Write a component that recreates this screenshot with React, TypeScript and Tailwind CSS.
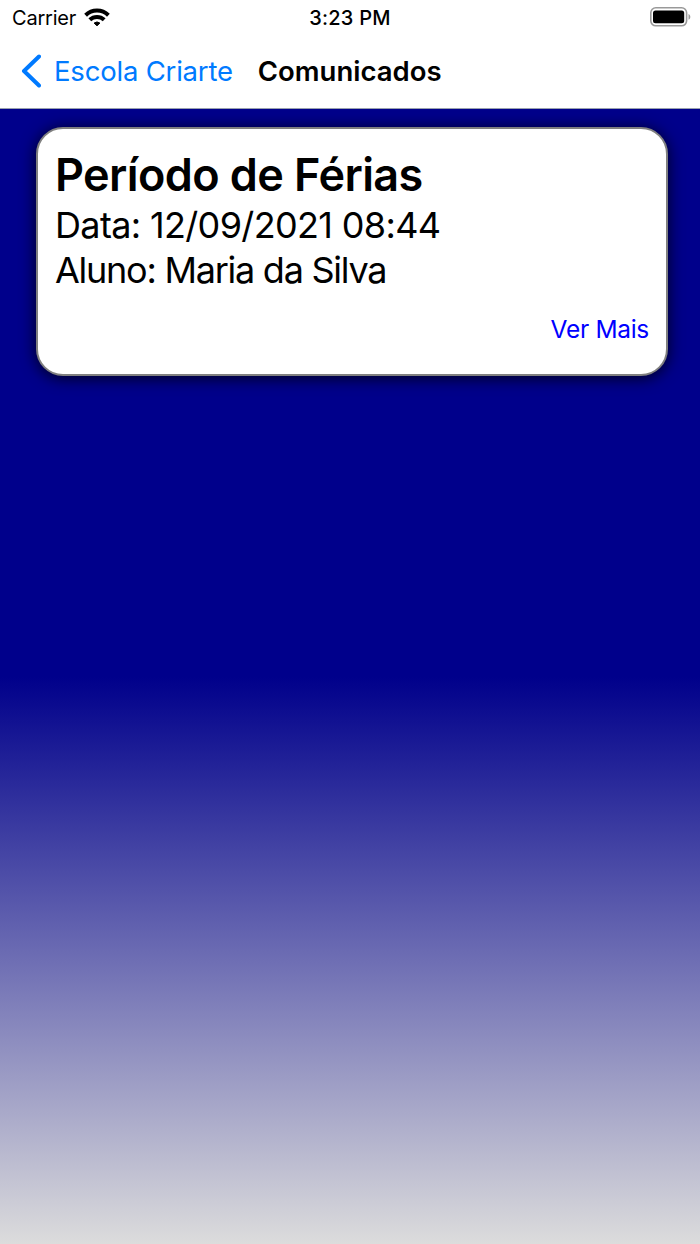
function StatusBar() {
  return (
    <div className="flex h-9 items-center justify-between px-[9px] text-black">
      <div className="flex w-[200px] items-center gap-2 pl-[3px]">
        <span className="text-[20px] leading-6 tracking-[-0.2px]">Carrier</span>
        <svg width="26" height="19" viewBox="0 0 26 19" fill="none" stroke="black" strokeWidth="4" className="relative -top-px">
          <path d="M1.6 7.2a16.3 16.3 0 0 1 22.8 0" />
          <path d="M5.8 11.8a10.4 10.4 0 0 1 14.4 0" />
          <path d="M13 17.8l-2.9-2.7a4.6 4.6 0 0 1 5.8 0z" fill="black" strokeWidth="1" strokeLinejoin="round" />
        </svg>
      </div>
      <span className="text-[20px] leading-6 font-medium tracking-[0.25px]">3:23 PM</span>
      <div className="flex w-[200px] justify-end">
        <svg width="41" height="20" viewBox="0 0 41 20" fill="none" className="relative -top-px">
          <rect x="0.8" y="0.8" width="35.8" height="18" rx="5" stroke="#999" strokeWidth="1.6" />
          <rect x="3" y="3.4" width="31.2" height="12.8" rx="2.5" fill="black" />
          <path d="M38.5 7v5.8c2.4-.9 2.4-4.9 0-5.8z" fill="#999" />
        </svg>
      </div>
    </div>
  )
}

function NavBar() {
  return (
    <div className="flex h-[73px] items-center border-b border-gray-400 pl-[21px]">
      <svg width="20" height="34" viewBox="0 0 20 34" fill="none" stroke="#007aff" strokeWidth="4" strokeLinecap="round" strokeLinejoin="round" className="relative -top-px">
        <path d="M18 2.5L3 17l15 14.5" />
      </svg>
      <span className="ml-[13px] text-[27.5px] tracking-[-0.2px] text-[#007aff]">Escola Criarte</span>
      <h1 className="ml-[25px] text-[27.5px] font-semibold text-black">Comunicados</h1>
    </div>
  )
}

export default function App() {
  return (
    <div className="flex h-[1244px] w-[700px] flex-col overflow-hidden bg-white font-['Inter',sans-serif]">
      <StatusBar />
      <NavBar />
      <main className="flex-1 bg-linear-to-b/srgb from-[#00008b] from-50% to-[#dcdcdc] px-9 pt-[18px]">
        <div className="h-[249px] w-[632px] rounded-[27px] border-2 border-[#808080] bg-white px-[17px] pt-[19px] text-black shadow-[0_2px_16px_rgba(0,0,0,0.8)]">
          <h2 className="text-[45px] leading-[54px] font-semibold tracking-[-0.6px]">Período de Férias</h2>
          <p className="mt-px text-[36px] leading-[45px] tracking-[-0.65px]">Data: 12/09/2021 08:44</p>
          <p className="text-[36px] leading-[45px] tracking-[-1.25px]">Aluno: Maria da Silva</p>
          <p className="mt-[18px] text-right text-[24.5px] tracking-[-0.3px] text-[#0000ff]">Ver Mais</p>
        </div>
      </main>
    </div>
  )
}
